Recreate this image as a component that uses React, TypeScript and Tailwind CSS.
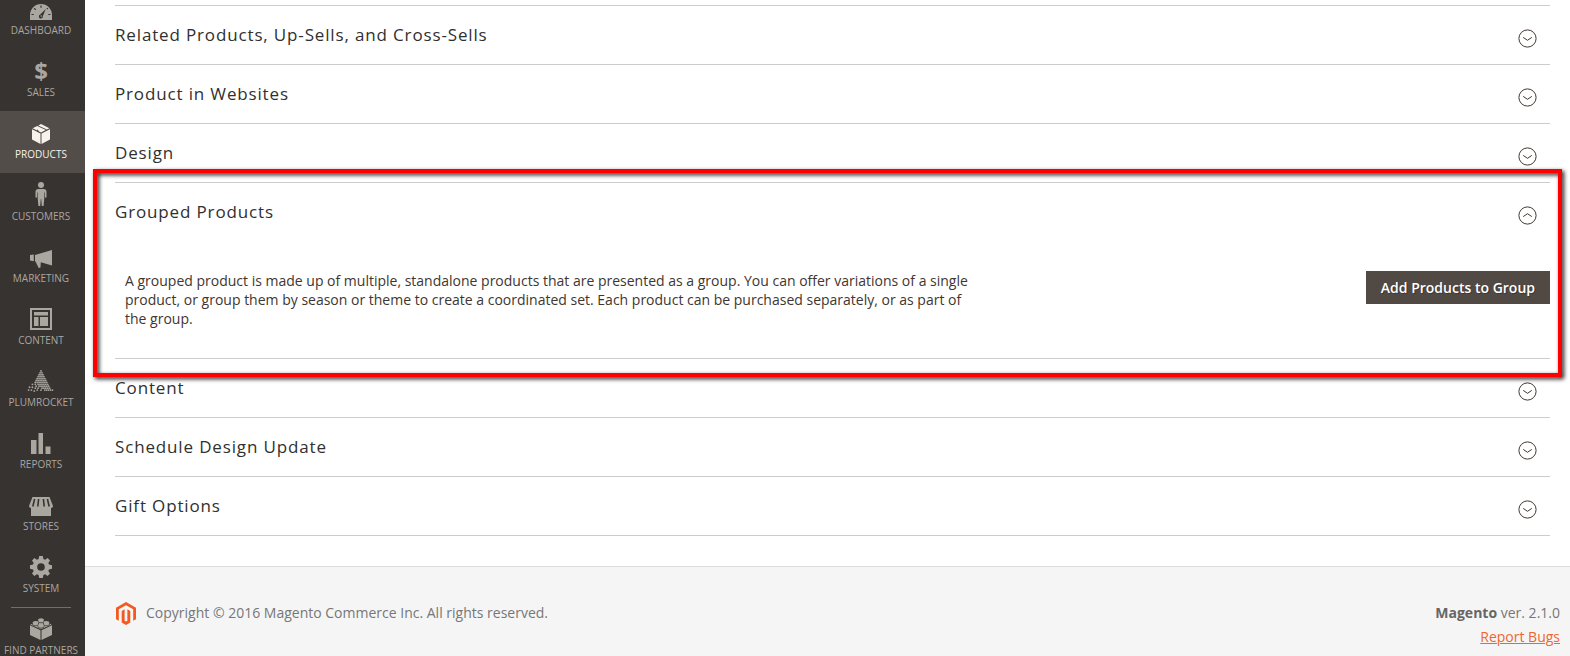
import { useState } from "react"
import type { ReactNode } from "react"
import clsx from "clsx"

const DashboardIcon = () => (
  <svg width="22" height="16" viewBox="0 0 22 16" fill="currentColor">
    <path d="M11 0A11 11 0 0 0 0 11v5h22v-5A11 11 0 0 0 11 0z" />
    <g stroke="#373330" strokeWidth="1.2" fill="none">
      <path d="M11 1.5v2.3M4.2 4.2l1.5 1.6M17.8 4.2l-1 1M1.5 10.5h2.2M20.5 10.5h-2.2" />
    </g>
    <path d="M15.8 5l-3 7.2a2 2 0 1 1-2.6-1.6z" fill="#373330" />
    <circle cx="11.2" cy="12" r=".8" />
  </svg>
)

const ProductsIcon = () => (
  <svg width="18" height="20" viewBox="0 0 18 20" fill="currentColor">
    <path d="M0 5.3l8.5 4.2V20L0 15.6zM18 5.3L9.5 9.5V20l8.500-4.400z" />
    <path d="M6.300 1.400L9 0l8.400 4.200-2.500 1.300zM5.200 1.900l8.600 4.200L9 8.500.6 4.300z" />
    <path d="M4.600 6.300l1.200-.7 1.700 3.100-1.200-.6z" fill="#524d49" />
  </svg>
)

const CustomersIcon = () => (
  <svg width="12" height="24" viewBox="0 0 12 24" fill="currentColor">
    <circle cx="6" cy="3" r="3" />
    <path d="M3.500 7h5C10.500 7 11.500 8.200 11.500 10v5.500H10V10.600h-.6V15L8.600 24H6.800L6.200 17h-.4L5.200 24H3.400L2.600 15v-4.400H2v4.900H.5V10C.5 8.200 1.500 7 3.500 7z" />
  </svg>
)

const MarketingIcon = () => (
  <svg width="22" height="18" viewBox="0 0 22 18" fill="currentColor">
    <path d="M22 0v15.500L10.800 12.300 10.500 17.500 8.700 18 6 12.500 5 11V5zM0 5l3.800-.4v6.600L0 10.600z" />
  </svg>
)

const ContentIcon = () => (
  <svg width="22" height="22" viewBox="0 0 22 22" fill="currentColor">
    <path d="M0 0h22v22H0zM2 2v18h18V2z" fillRule="evenodd" />
    <path d="M4 4h14v3.500H4zM4 9h4.500v9H4zM10 9h8v9h-8z" />
  </svg>
)

const dots = [
  [14, 0],
  [13, 2], [15, 2],
  [12, 4], [14, 4], [16, 4],
  [11, 6], [13, 6], [15, 6], [17, 6],
  [10, 8], [12, 8], [14, 8], [16, 8], [18, 8],
  [9, 10], [11, 10], [13, 10], [15, 10], [17, 10], [19, 10],
  [8, 12], [10, 12], [12, 12], [14, 12], [16, 12], [18, 12], [20, 12],
  [5, 14], [8, 14], [11, 14], [13, 14], [15, 14], [17, 14], [19, 14], [21, 14],
  [5, 17], [9, 16], [12, 16], [14, 16], [16, 16], [18, 16], [20, 16], [22, 16],
  [2, 17], [8, 18], [11, 18], [15, 18], [17, 18], [19, 18], [21, 18], [23, 18],
  [1, 20], [4, 20], [7, 21], [10, 20], [14, 20], [18, 20], [20, 20], [22, 20], [24, 20], [26, 20],
]

const PlumrocketIcon = () => (
  <svg width="28" height="22" viewBox="0 -1 28 23" fill="currentColor">
    {dots.map(([x, y]) => (
      <circle key={`${x}-${y}`} cx={x} cy={y} r=".95" />
    ))}
  </svg>
)

const ReportsIcon = () => (
  <svg width="20" height="21" viewBox="0 0 20 21" fill="currentColor">
    <path d="M0 7h5.500v14H0zM7.500 0H12v21H7.500zM14.500 13.500h5V21h-5z" />
  </svg>
)

const StoresIcon = () => (
  <svg width="24" height="19" viewBox="0 0 24 19" fill="currentColor">
    <path d="M3.500 0h17L24 9c0 1.200-1 2-2 2v8H2v-8c-1 0-2-.8-2-2z" />
    <path d="M5.600 2L3.800 9.500M9.600 2L8.800 9.500M14.400 2l.8 7.500M18.400 2l1.800 7.500" stroke="#373330" strokeWidth="1.600" />
  </svg>
)

const SystemIcon = () => (
  <svg width="22" height="22" viewBox="0 0 22 22" fill="currentColor">
    <path
      fillRule="evenodd"
      d="M9.200 0h3.600l.6 3 1.700.7 2.500-1.700L20 4.400l-1.700 2.500.7 1.700 3 .6v3.600l-3 .6-.7 1.700 1.700 2.500-2.400 2.400-2.500-1.700-1.700.7-.6 3H9.200l-.6-3-1.700-.7L4.400 20 2 17.600l1.700-2.500L3 13.400l-3-.6V9.200l3-.6.7-1.700L2 4.400 4.400 2l2.500 1.700L8.600 3zM11 7.200a3.800 3.800 0 1 0 0 7.600 3.800 3.800 0 0 0 0-7.600z"
    />
  </svg>
)

const PartnersIcon = () => (
  <svg width="22" height="22" viewBox="0 0 22 22" fill="currentColor">
    <path d="M0 7.300l10.500 4.900V22L0 17zM22 7.300l-10.500 4.900V22L22 17z" />
    <path d="M11 1.400l10.600 5L11 11.300.4 6.400z" />
    <g stroke="#373330" strokeWidth=".8">
      <path d="M8 1.600v1.700c0 2 6 2 6 0V1.600M2.500 4.500v1.700c0 2 6 2 6 0V4.500M13.500 4.500v1.700c0 2 6 2 6 0V4.500M8 7.100v1.500c0 2 6 2 6 0V7.100" />
    </g>
    <ellipse cx="11" cy="1.700" rx="2.800" ry="1.500" />
    <ellipse cx="5.500" cy="4.600" rx="2.800" ry="1.500" />
    <ellipse cx="16.500" cy="4.600" rx="2.800" ry="1.500" />
    <ellipse cx="11" cy="7.200" rx="2.800" ry="1.500" />
  </svg>
)

const SalesIcon = () => <span className="text-[24px] leading-[22px] font-bold">$</span>

const MagentoLogo = () => (
  <svg width="20" height="23" viewBox="0 0 20 23" fill="#f15a22">
    <path d="M10 0l10 5.700v11.500l-2.800 1.600V7.300L10 3.200 2.800 7.300v11.500L0 17.200V5.700z" />
    <path d="M8.600 7.300v11.500l1.400.8 1.400-.8V7.300l2.900 1.600v11.500L10 23l-4.300-2.600V8.900z" />
  </svg>
)

const menu = [
  { label: "Dashboard", icon: DashboardIcon },
  { label: "Sales", icon: SalesIcon },
  { label: "Products", icon: ProductsIcon, active: true },
  { label: "Customers", icon: CustomersIcon },
  { label: "Marketing", icon: MarketingIcon },
  { label: "Content", icon: ContentIcon },
  { label: "Plumrocket", icon: PlumrocketIcon },
  { label: "Reports", icon: ReportsIcon },
  { label: "Stores", icon: StoresIcon },
  { label: "System", icon: SystemIcon },
  { label: "Find Partners", icon: PartnersIcon, divider: true },
]

function Sidebar() {
  return (
    <nav className="w-[85px] shrink-0 overflow-hidden bg-[#373330]">
      <ul className="-mt-[13px]">
        {menu.map(({ label, icon: Icon, active, divider }) => (
          <li key={label} className="relative">
            {divider && <span className="absolute top-0 left-[11px] h-px w-[60px] bg-[#736e69]" />}
            <a
              href="#"
              className={clsx(
                "flex h-[62px] flex-col items-center pr-[3px] whitespace-nowrap uppercase",
                active ? "bg-[#524d49] text-[#f7f3eb]" : "text-[#aaa6a0]"
              )}
            >
              <span className="flex h-[33px] items-end">
                <Icon />
              </span>
              <span className="mt-1 text-[10px] leading-3">{label}</span>
            </a>
          </li>
        ))}
      </ul>
    </nav>
  )
}

type SectionProps = {
  title: string
  defaultOpen?: boolean
  highlighted?: boolean
  children?: ReactNode
}

function Section({ title, defaultOpen = false, highlighted, children }: SectionProps) {
  const [open, setOpen] = useState(defaultOpen)

  return (
    <section className="relative border-t border-[#cccccc]">
      <button
        type="button"
        aria-expanded={open}
        onClick={() => setOpen(!open)}
        className="flex h-[58px] w-full items-center justify-between pr-[13px] text-left"
      >
        <span className="text-[17px] leading-6 font-medium tracking-wider text-[#303030]">{title}</span>
        <svg
          width="19"
          height="19"
          viewBox="0 0 19 19"
          fill="none"
          stroke="#41362f"
          className={clsx("mt-1.5", open && "rotate-180")}
        >
          <circle cx="9.500" cy="9.500" r="8.600" />
          <path d="M5.200 8.400l4.300 2.900 4.300-2.900" />
        </svg>
      </button>
      {open && children}
      {highlighted && (
        <div className="pointer-events-none absolute -top-[14px] -right-3 -bottom-[19px] -left-[22px] z-10 border-4 border-[#ff0000] drop-shadow-[2px_2px_2px_rgba(0,0,0,0.9)]" />
      )}
    </section>
  )
}

export default function App() {
  return (
    <div className="flex h-screen overflow-hidden bg-white font-['Open_Sans',sans-serif] text-sm">
      <Sidebar />
      <div className="flex min-w-0 grow flex-col">
        <main className="pt-[5px] pr-5 pb-[30px] pl-[30px]">
          <div className="border-b border-[#cccccc]">
            <Section title="Related Products, Up-Sells, and Cross-Sells" />
            <Section title="Product in Websites" />
            <Section title="Design" />
            <Section title="Grouped Products" defaultOpen highlighted>
              <div className="flex items-start justify-between pt-[30px] pb-[30px]">
                <p className="w-3/5 pl-2.5 leading-[19px] text-[#41362f]">
                  A grouped product is made up of multiple, standalone products that are presented as a group. You can
                  offer variations of a single product, or group them by season or theme to create a coordinated set.
                  Each product can be purchased separately, or as part of the group.
                </p>
                <button
                  type="button"
                  className="h-[33px] bg-[#514943] px-[15px] font-semibold text-white text-shadow-[1px_1px_0_rgba(0,0,0,0.25)]"
                >
                  Add Products to Group
                </button>
              </div>
            </Section>
            <Section title="Content" />
            <Section title="Schedule Design Update" />
            <Section title="Gift Options" />
          </div>
        </main>
        <footer className="flex grow items-start justify-between border-t border-[#dddddd] bg-[#f5f5f5] pt-[34px] pr-2.5 pl-[31px] text-[#777777]">
          <div className="flex items-center gap-2.5">
            <MagentoLogo />
            <p className="leading-6">Copyright © 2016 Magento Commerce Inc. All rights reserved.</p>
          </div>
          <div className="text-right leading-6">
            <p>
              <strong className="font-bold text-[#666666]">Magento</strong> ver. 2.1.0
            </p>
            <a href="#" className="text-[#ef672f] underline">
              Report Bugs
            </a>
          </div>
        </footer>
      </div>
    </div>
  )
}
